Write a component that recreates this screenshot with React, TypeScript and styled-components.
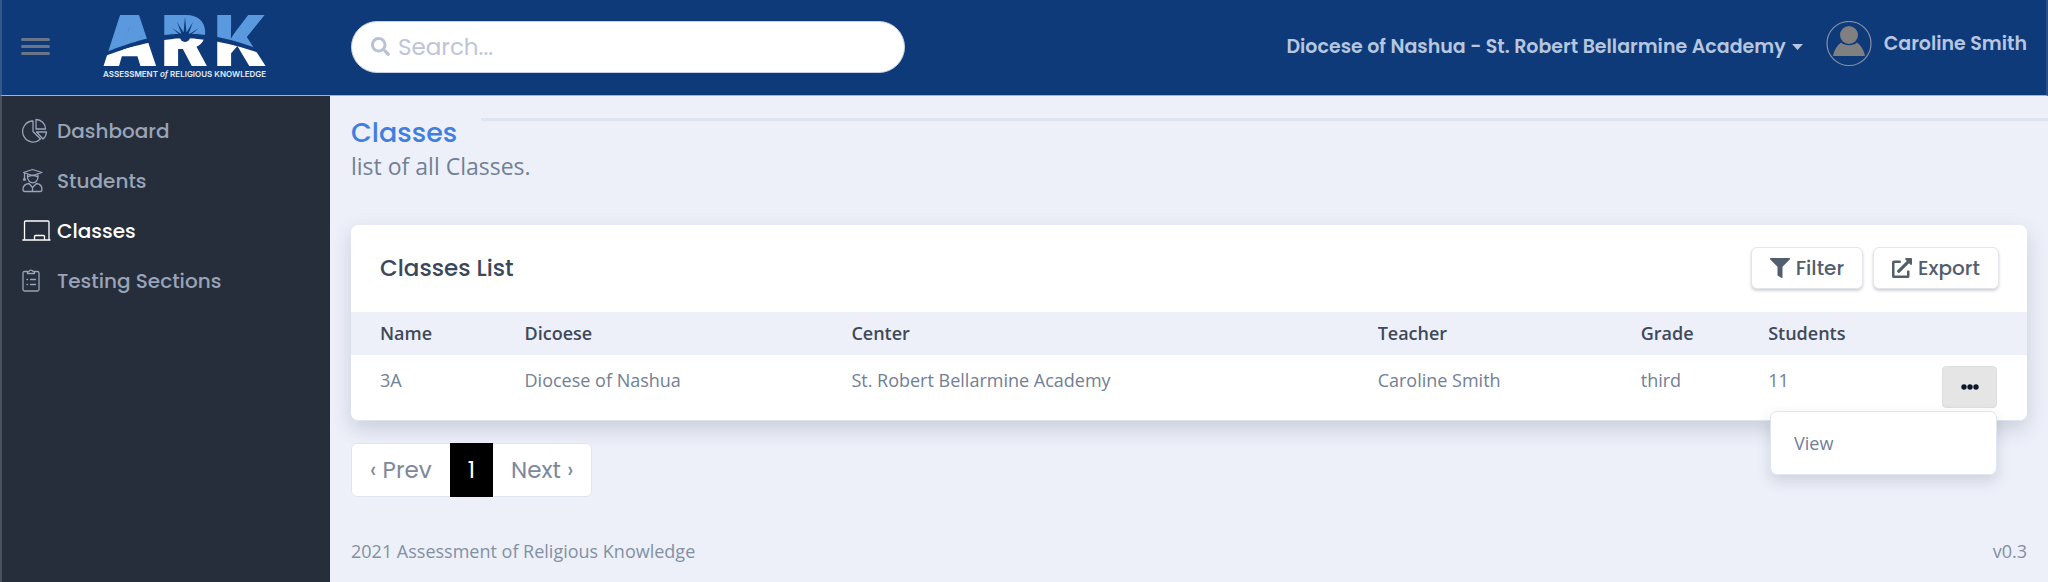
import React, { useState } from "react";
import styled, { createGlobalStyle } from "styled-components";
import { FaSearch, FaFilter, FaExternalLinkAlt } from "react-icons/fa";

const display = `"Poppins", "Inter", sans-serif`;
const text = `"Open Sans", "Noto Sans", sans-serif`;

const Global = createGlobalStyle`
  *, *::before, *::after { box-sizing: border-box; }
  body {
    margin: 0;
    background: #edf0f9;
    color: #718096;
    font-family: ${text};
    font-size: 18px;
    line-height: 28px;
  }
  button, input { font: inherit; color: inherit; }
  h1, h2, p { margin: 0; }
`;

const Shell = styled.div`
  min-height: 100vh;
  display: flex;
  flex-direction: column;
`;

const Header = styled.header`
  display: flex;
  align-items: center;
  height: 96px;
  background: #0e3a7a;
  border-bottom: 1px solid #9fb3d6;
  border-left: 2px solid #35598f;
  border-right: 2px solid #2a5089;
  padding-right: 19px;
`;

const Brand = styled.div`
  flex: none;
  width: 349px;
  display: flex;
  align-items: center;
  padding-left: 19px;
  gap: 40px;
`;

const MenuButton = styled.button`
  display: flex;
  flex-direction: column;
  gap: 4px;
  width: 29px;
  margin-bottom: 3px;
  padding: 0;
  border: 0;
  background: none;
  cursor: pointer;
`;

const Bar = styled.span`
  height: 3px;
  border-radius: 2px;
  background: #6a7688;
`;

const Search = styled.label`
  display: flex;
  align-items: center;
  gap: 8px;
  flex: 0 1 554px;
  height: 52px;
  margin-bottom: 2px;
  padding: 0 19px;
  border: 1px solid #c4d0e4;
  border-radius: 26px;
  background: #fff;
  color: #b8c2d6;
  font-size: 19px;
`;

const SearchInput = styled.input`
  flex: 1;
  min-width: 0;
  border: 0;
  outline: 0;
  padding: 0;
  background: none;
  font-family: ${display};
  font-size: 23px;
  color: #4a5568;
  &::placeholder { color: #bcc5d8; opacity: 1; }
`;

const HeaderRight = styled.div`
  display: flex;
  align-items: center;
  margin-left: auto;
  margin-bottom: 8px;
`;

const HeaderButton = styled.button`
  display: flex;
  align-items: center;
  gap: 6px;
  padding: 0;
  border: 0;
  background: none;
  color: #b7c6df;
  font-family: ${display};
  font-weight: 600;
  font-size: 19px;
  white-space: nowrap;
  cursor: pointer;
`;

const SchoolButton = styled(HeaderButton)`
  margin: 6px 23px 0 0;
`;

const UserButton = styled(HeaderButton)`
  gap: 12px;
`;

const Body = styled.div`
  flex: 1;
  display: flex;
`;

const Sidebar = styled.nav`
  flex: none;
  width: 330px;
  padding: 10px 0;
  background: #252e3a;
  border-left: 2px solid #4a525d;
`;

const NavLink = styled.a<{ $active?: boolean }>`
  display: flex;
  align-items: center;
  height: 50px;
  padding-left: 20px;
  color: ${(p) => (p.$active ? "#ffffff" : "#9aa4b8")};
  font-family: ${display};
  font-weight: 500;
  font-size: 20px;
  text-decoration: none;
`;

const NavIcon = styled.svg`
  flex: none;
  width: 35px;
  height: 26px;
  fill: none;
  stroke: currentColor;
  stroke-width: 1.3;
  stroke-linejoin: round;
  stroke-linecap: round;
`;

const Main = styled.main`
  flex: 1;
  min-width: 0;
  display: flex;
  flex-direction: column;
  padding: 22px 21px 17px;
`;

const TitleRow = styled.div`
  display: flex;
  align-items: flex-start;
  gap: 24px;
  margin-right: -21px;
`;

const Title = styled.h1`
  color: #3f7fe0;
  font-family: ${display};
  font-weight: 500;
  font-size: 27px;
  line-height: 30px;
`;

const Rule = styled.div`
  flex: 1;
  height: 3px;
  background: #dbe4ef;
`;

const Subtitle = styled.p`
  font-size: 23px;
  line-height: 36px;
`;

const Card = styled.section`
  margin-top: 41px;
  background: #fff;
  border-bottom: 1px solid #dde5f0;
  border-radius: 7px;
  box-shadow: 0 8px 20px rgba(60, 70, 90, 0.2);
`;

const CardHeader = styled.div`
  display: flex;
  align-items: center;
  gap: 10px;
  height: 87px;
  padding: 0 28px 2px 29px;
`;

const CardTitle = styled.h2`
  flex: 1;
  color: #3d4759;
  font-family: ${display};
  font-weight: 500;
  font-size: 23px;
`;

const ActionButton = styled.button`
  display: flex;
  align-items: center;
  gap: 6px;
  height: 42px;
  padding: 0 18px;
  border: 1px solid #e2e5ea;
  border-radius: 6px;
  background: #fff;
  box-shadow: 0 2px 3px rgba(0, 0, 0, 0.18);
  color: #525d6e;
  font-family: ${display};
  font-weight: 500;
  font-size: 20px;
  cursor: pointer;
`;

const Table = styled.table`
  width: 100%;
  table-layout: fixed;
  border-collapse: collapse;
  text-align: left;
`;

const Col = styled.col<{ $share: number }>`
  width: ${(p) => p.$share}%;
`;

const Th = styled.th`
  height: 43px;
  padding: 0 11px 2px;
  background: #edf0f8;
  color: #3f495a;
  font-weight: 600;
  &:first-child { padding-left: 29px; }
`;

const Td = styled.td`
  height: 65px;
  padding: 11px 11px 0;
  vertical-align: top;
  &:first-child { padding-left: 29px; }
  &:last-child { padding-right: 30px; }
`;

const MenuAnchor = styled.div`
  position: relative;
  display: flex;
  justify-content: flex-end;
`;

const DotsButton = styled.button`
  display: grid;
  place-items: center;
  width: 55px;
  height: 42px;
  padding: 0;
  border: 1px solid #dedede;
  border-radius: 4px;
  background: #e5e5e5;
  color: #0f172a;
  cursor: pointer;
`;

const Menu = styled.div`
  position: absolute;
  top: 45px;
  right: 0;
  z-index: 1;
  width: 227px;
  padding: 11px 0;
  border: 1px solid #dfe6f1;
  border-radius: 7px;
  background: #fff;
  box-shadow: 0 6px 14px rgba(60, 70, 90, 0.18);
`;

const MenuItem = styled.a`
  display: block;
  padding: 6px 23px;
  color: #718096;
  text-decoration: none;
`;

const Pager = styled.nav`
  display: flex;
  align-self: flex-start;
  align-items: center;
  height: 54px;
  margin-top: 22px;
  border: 1px solid #dfe6f2;
  border-radius: 6px;
  background: #fff;
  font-family: ${display};
  font-size: 23px;
`;

const PageLink = styled.a<{ $current?: boolean }>`
  display: grid;
  place-items: center;
  height: 54px;
  padding: 0 18px;
  background: ${(p) => (p.$current ? "#000" : "none")};
  color: ${(p) => (p.$current ? "#fff" : "#7d889d")};
  text-decoration: none;
`;

const Footer = styled.footer`
  display: flex;
  justify-content: space-between;
  margin-top: auto;
  color: #8290a3;
`;

const LogoWord = styled.text`
  font-family: "Inter", sans-serif;
  font-weight: 900;
  font-size: 70px;
`;

const LogoTag = styled.text`
  font-family: "Inter", sans-serif;
  font-weight: 600;
  font-size: 8px;
  fill: #e4ebf5;
`;

const rays = [
  [170, 32], [172, 27], [177, 21], [185, 16], [193, 21], [199, 27], [201, 32],
];

const Logo = () => (
  <svg width="190" height="94" viewBox="90 0 190 94" role="img" aria-label="ARK">
    <defs>
      <pattern id="horizon" patternUnits="userSpaceOnUse" x="90" y="0" width="190" height="94" viewBox="90 0 190 94">
        <path d="M90 0H280V57Q226 32.500 185 32.500Q146 32.500 90 58Z" fill="#5a99de" />
        <path d="M90 61Q146 37.500 185 37.500Q226 37.500 280 60V94H90Z" fill="#fff" />
      </pattern>
    </defs>
    <g fill="url(#horizon)">
      <LogoWord x="102 161 214" y="65">ARK</LogoWord>
      <path d="M121 54L130 24L141 54Z" />
      <path d="M172 22H195V38H172Z" />
    </g>
    <g fill="#0e3a7a">
      {rays.map(([x, y]) => (
        <path key={x} d={`M${x} ${y}L183 37L187 37Z`} />
      ))}
      <circle cx="185" cy="36" r="5" />
    </g>
    <LogoTag x="103" y="76">
      ASSESSMENT <tspan fontStyle="italic">of</tspan> RELIGIOUS KNOWLEDGE
    </LogoTag>
  </svg>
);

const Avatar = () => (
  <svg width="46" height="46" viewBox="0 0 46 46" aria-hidden="true">
    <circle cx="23" cy="22.500" r="22" fill="none" stroke="#8590a3" strokeWidth="1.200" />
    <circle cx="23" cy="14" r="9" fill="#808080" />
    <path d="M7 35C8 29 11 24.500 15 21.500C19 25 27 25 31 21.500C35 24.500 38 29 39 35Z" fill="#808080" />
  </svg>
);

const navItems = [
  {
    label: "Dashboard",
    icon: (
      <path d="M11 3A10.500 10.500 0 1 0 18.500 21L11 13.500Z M14 1.500V11H23.500A9.500 9.500 0 0 0 14 1.500Z M14.500 14H24.500A10 10 0 0 1 21 21Z" />
    ),
  },
  {
    label: "Students",
    icon: (
      <path d="M1.500 4.500L10.500 1.500L20 4.500L10.500 7.500Z M2.500 5V10 M1.500 12L2.500 9.500L3.500 12Z M5.500 6.500V9A5 5.500 0 0 0 16 9V6.500 M5.500 9Q10.500 5.500 16 9 M7 15.500C3 16 1 18 1 21.500Q1 23.500 3 23.500H18Q20 23.500 20 21.500C20 18 18 16 14.500 15.500L10.500 19.500Z M10.500 19.500V23.500" />
    ),
  },
  {
    label: "Classes",
    active: true,
    icon: (
      <path d="M2.500 22V4Q2.500 3 3.500 3H26Q27 3 27 4V22 M.800 22H28 M12.500 22V18.500Q12.500 17.500 13.500 17.500H21.500Q22.500 17.500 22.500 18.500V22" />
    ),
  },
  {
    label: "Testing Sections",
    icon: (
      <path d="M5.500 3.500H2.500Q1 3.500 1 5V21.500Q1 23 2.500 23H15.500Q17 23 17 21.500V5Q17 3.500 15.500 3.500H12.500 M5.500 5.500V3.500H7A2.200 2.200 0 0 1 11 3.500H12.500V5.500Z M5 11.500H5.500 M8.500 11.500H13.500 M5 16.500H5.500 M8.500 16.500H13.500" />
    ),
  },
];

const columns = [
  { label: "Name", share: 9.7 },
  { label: "Dicoese", share: 19.5 },
  { label: "Center", share: 31.4 },
  { label: "Teacher", share: 15.7 },
  { label: "Grade", share: 7.6 },
  { label: "Students", share: 8.1 },
];

const rows = [
  ["3A", "Diocese of Nashua", "St. Robert Bellarmine Academy", "Caroline Smith", "third", "11"],
];

export default function App() {
  const [open, setOpen] = useState(true);
  return (
    <Shell>
      <Global />
      <Header>
        <Brand>
          <MenuButton aria-label="Toggle menu">
            <Bar />
            <Bar />
            <Bar />
          </MenuButton>
          <Logo />
        </Brand>
        <Search>
          <FaSearch aria-hidden="true" />
          <SearchInput type="text" placeholder="Search..." aria-label="Search" />
        </Search>
        <HeaderRight>
          <SchoolButton>
            Diocese of Nashua - St. Robert Bellarmine Academy
            <svg width="11" height="6" viewBox="0 0 11 6" aria-hidden="true">
              <path d="M0 0H11L5.500 6Z" fill="currentColor" />
            </svg>
          </SchoolButton>
          <UserButton>
            <Avatar />
            Caroline Smith
          </UserButton>
        </HeaderRight>
      </Header>
      <Body>
        <Sidebar aria-label="Main">
          {navItems.map((item) => (
            <NavLink key={item.label} href="#" $active={item.active}>
              <NavIcon viewBox="0 0 35 26" aria-hidden="true">{item.icon}</NavIcon>
              {item.label}
            </NavLink>
          ))}
        </Sidebar>
        <Main>
          <TitleRow>
            <Title>Classes</Title>
            <Rule />
          </TitleRow>
          <Subtitle>list of all Classes.</Subtitle>
          <Card>
            <CardHeader>
              <CardTitle>Classes List</CardTitle>
              <ActionButton>
                <FaFilter aria-hidden="true" />
                Filter
              </ActionButton>
              <ActionButton>
                <FaExternalLinkAlt aria-hidden="true" />
                Export
              </ActionButton>
            </CardHeader>
            <Table>
              <colgroup>
                {columns.map((c) => (
                  <Col key={c.label} $share={c.share} />
                ))}
                <col />
              </colgroup>
              <thead>
                <tr>
                  {columns.map((c) => (
                    <Th key={c.label}>{c.label}</Th>
                  ))}
                  <Th aria-label="Actions" />
                </tr>
              </thead>
              <tbody>
                {rows.map((row) => (
                  <tr key={row[0]}>
                    {row.map((cell, i) => (
                      <Td key={i}>{cell}</Td>
                    ))}
                    <Td>
                      <MenuAnchor>
                        <DotsButton aria-label="Row actions" aria-expanded={open} onClick={() => setOpen(!open)}>
                          <svg width="18" height="6" viewBox="0 0 18 6" fill="currentColor" aria-hidden="true">
                            <circle cx="3" cy="3" r="2.700" />
                            <circle cx="9" cy="3" r="2.700" />
                            <circle cx="15" cy="3" r="2.700" />
                          </svg>
                        </DotsButton>
                        {open && (
                          <Menu>
                            <MenuItem href="#">View</MenuItem>
                          </Menu>
                        )}
                      </MenuAnchor>
                    </Td>
                  </tr>
                ))}
              </tbody>
            </Table>
          </Card>
          <Pager aria-label="Pagination">
            <PageLink href="#">‹ Prev</PageLink>
            <PageLink href="#" $current aria-current="page">1</PageLink>
            <PageLink href="#">Next ›</PageLink>
          </Pager>
          <Footer>
            <span>2021 Assessment of Religious Knowledge</span>
            <span>v0.3</span>
          </Footer>
        </Main>
      </Body>
    </Shell>
  );
}
